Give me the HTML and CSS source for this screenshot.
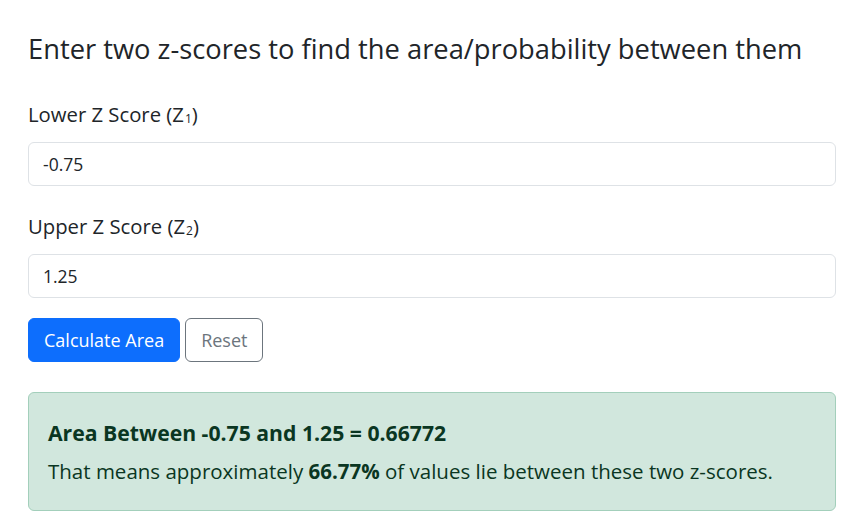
FILE: index.html
```html
<!DOCTYPE html>
<html lang="en">
<head>
<meta charset="utf-8">
<title>Z-Score Area Between</title>
<link rel="stylesheet" href="styles.css">
</head>
<body>
<main class="calc">
  <h3 class="calc-title">Enter two z-scores to find the area/probability between them</h3>
  <div class="field field-lower">
    <label class="field-label" for="z1">Lower Z Score (Z<sub class="sub">1</sub>)</label>
    <input class="field-input" id="z1" type="text" value="-0.75">
  </div>
  <div class="field field-upper">
    <label class="field-label" for="z2">Upper Z Score (Z<sub class="sub">2</sub>)</label>
    <input class="field-input" id="z2" type="text" value="1.25">
  </div>
  <div class="actions">
    <button class="btn btn-primary" type="button">Calculate Area</button>
    <button class="btn btn-outline" type="button">Reset</button>
  </div>
  <div class="result">
    <p class="result-main">Area Between -0.75 and 1.25 = 0.66772</p>
    <p class="result-note">That means approximately <strong>66.77%</strong> of values lie between these two z-scores.</p>
  </div>
</main>
</body>
</html>
```
FILE: styles.css
```css
* { box-sizing: border-box; }
html, body { margin: 0; padding: 0; background: #fff; }
body {
  font-family: "Open Sans", "Noto Sans", sans-serif;
  color: #212529;
}
.calc {
  width: 808px;
  margin-left: 28px;
  display: flex;
  flex-direction: column;
}
.calc-title {
  margin: 32px 0 0;
  font-size: 27.3px;
  line-height: 34px;
  font-weight: 400;
  color: #212529;
}
.field { display: flex; flex-direction: column; }
.field-lower { margin-top: 33px; }
.field-upper { margin-top: 25px; }
.field-label {
  font-size: 20.3px;
  line-height: 30px;
  margin-bottom: 13px;
}
.sub {
  font-size: 12px;
  line-height: 0;
  vertical-align: -1px;
  margin-left: 1px;
}
.field-input {
  height: 44px;
  width: 100%;
  border: 1px solid #dee2e6;
  border-radius: 6px;
  padding: 0 14px;
  font-family: inherit;
  font-size: 17.5px;
  color: #212529;
  background: #fff;
  outline: none;
}
.actions {
  margin-top: 20px;
  display: flex;
  gap: 5px;
}
.btn {
  height: 44px;
  border-radius: 6px;
  padding: 0 15px;
  font-family: inherit;
  font-size: 18px;
  cursor: pointer;
  background: #fff;
}
.btn-primary {
  background: #0d6efd;
  border: 1px solid #0d6efd;
  color: #fff;
}
.btn-outline {
  border: 1px solid #6c757d;
  color: #6c757d;
}
.result {
  margin-top: 30px;
  background: #d1e7dd;
  border: 1px solid #a3cfbb;
  border-radius: 6px;
  padding: 21px 19px 20px;
  color: #0a3622;
}
.result p { margin: 0; font-size: 20.5px; line-height: 38px; }
.result .result-main { font-weight: 700; font-size: 21.2px; }
.result-note strong { font-weight: 700; }
```
